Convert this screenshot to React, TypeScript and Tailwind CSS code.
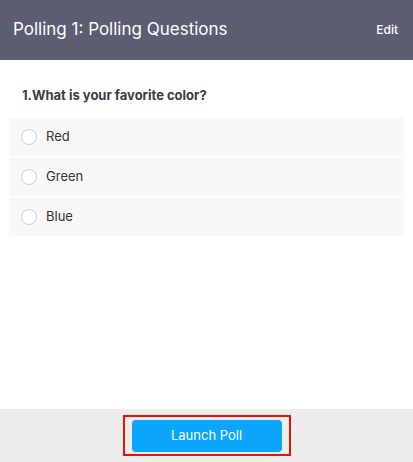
export default function App() {
  const options = ['Red', 'Green', 'Blue'];

  return (
    <div
      className="w-[413px] h-[462px] flex flex-col bg-white"
      style={{ fontFamily: 'Inter, "Liberation Sans", Arial, sans-serif' }}
    >
      <div className="h-[60px] bg-[#5b5d70] flex items-center justify-between pl-[13px] pr-[15px] shrink-0">
        <h1 className="text-white text-[17px] font-normal">Polling 1: Polling Questions</h1>
        <button className="text-white text-[12px] font-medium">Edit</button>
      </div>

      <div className="flex-1 px-[9px]">
        <p className="text-[13px] font-bold text-[#3b3b45] pl-[13px] pt-[27px] pb-[15px] leading-[16px]">
          1.What is your favorite color?
        </p>
        <div className="flex flex-col gap-[2px]">
          {options.map((opt) => (
            <label
              key={opt}
              className="h-[38px] bg-[#f8f8f8] flex items-center pl-[12px] gap-[9px]"
            >
              <span className="w-[16px] h-[16px] rounded-full border border-[#cfcfcf] bg-white" />
              <span className="text-[13px] text-[#333]">{opt}</span>
            </label>
          ))}
        </div>
      </div>

      <div className="h-[53px] bg-[#ececec] flex items-center justify-center shrink-0">
        <div className="border-2 border-[#f20d0d] p-[7px] pt-[3px] pb-[2px]">
          <button className="w-[150px] h-[32px] rounded-[4px] bg-[#0ba5fc] text-white text-[13px]">
            Launch Poll
          </button>
        </div>
      </div>
    </div>
  );
}
